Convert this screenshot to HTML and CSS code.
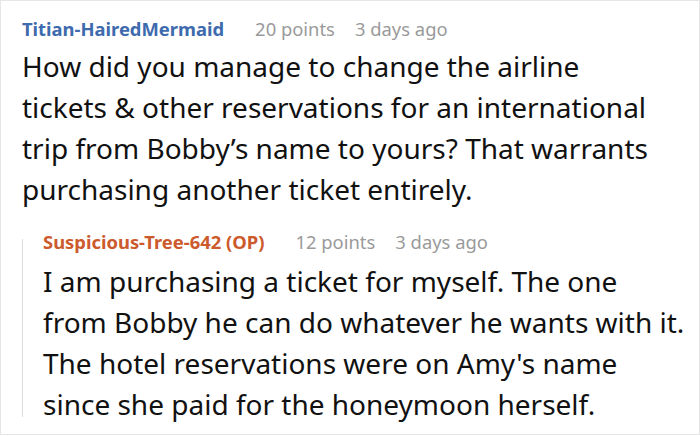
FILE: index.html
```html
<!DOCTYPE html>
<html>
<head>
<meta charset="utf-8">
<link rel="stylesheet" href="styles.css">
</head>
<body>
<div class="thread">
  <div class="comment">
    <div class="meta">
      <span class="author">Titian-HairedMermaid</span>
      <span class="info">20 points</span>
      <span class="info">3 days ago</span>
    </div>
    <p class="text">How did you manage to change the airline<br>tickets &amp; other reservations for an international<br>trip from Bobby’s name to yours? That warrants<br>purchasing another ticket entirely.</p>
  </div>
  <div class="reply">
    <div class="meta">
      <span class="author op">Suspicious-Tree-642 (OP)</span>
      <span class="info">12 points</span>
      <span class="info">3 days ago</span>
    </div>
    <p class="text">I am purchasing a ticket for myself. The one<br>from Bobby he can do whatever he wants with it.<br>The hotel reservations were on Amy's name<br>since she paid for the honeymoon herself.</p>
  </div>
</div>
</body>
</html>
```

FILE: styles.css
```css
html, body {
  margin: 0;
  padding: 0;
  background: #fff;
}
body {
  font-family: "Noto Sans", "Open Sans", sans-serif;
  color: #111;
}
.thread {
  width: 700px;
  height: 435px;
  box-sizing: border-box;
  border: 1px solid #e6e6e6;
  padding: 16px 0 0 21px;
  overflow: hidden;
}
.meta {
  display: flex;
  align-items: baseline;
  gap: 20px;
  font-size: 18.4px;
  line-height: 24px;
  white-space: nowrap;
}
.author {
  font-weight: 700;
  color: #3e6aae;
  margin-right: 11px;
}
.author.op {
  color: #cc5a2c;
}
.info {
  color: #9a9a9a;
}
.text {
  margin: 5px 0 0;
  font-size: 28px;
  line-height: 41px;
  white-space: nowrap;
}
.reply {
  position: relative;
  margin-top: 20px;
  padding-left: 21px;
}
.reply::before {
  content: "";
  position: absolute;
  left: 0;
  top: 9px;
  height: 178px;
  width: 1px;
  background: #dcdcdc;
}
.reply .text {
  margin-top: 7px;
}
```
